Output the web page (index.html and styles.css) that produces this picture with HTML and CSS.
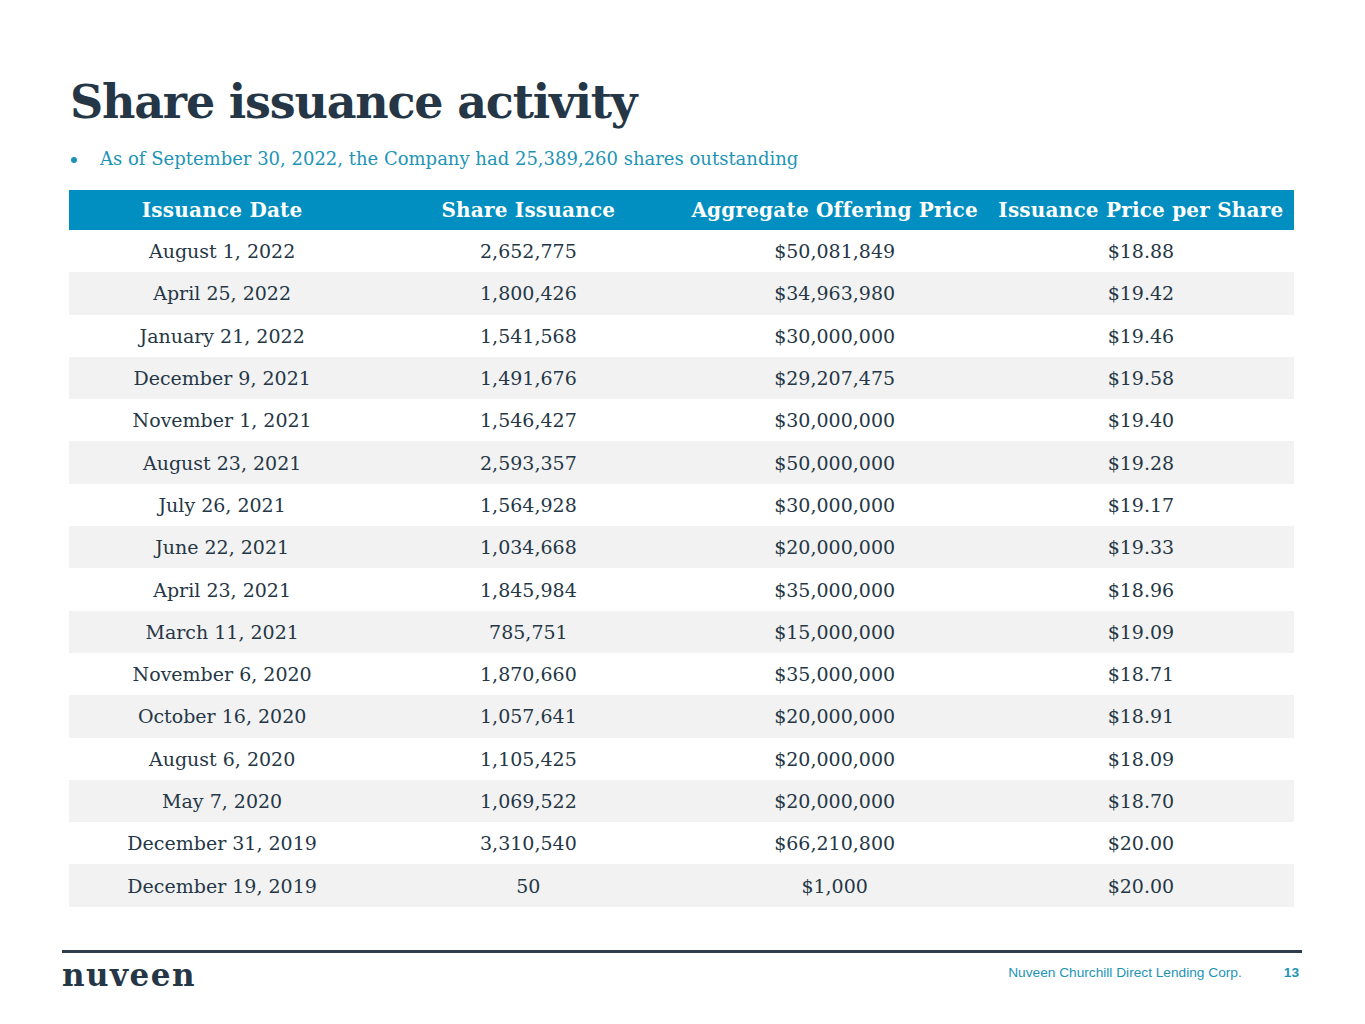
FILE: index.html
```html
<!DOCTYPE html>
<html>
<head>
<meta charset="utf-8">
<link rel="stylesheet" href="styles.css">
</head>
<body>
<div class="slide">
  <h1 class="title">Share issuance activity</h1>
  <ul class="bullets">
    <li>As of September 30, 2022, the Company had 25,389,260 shares outstanding</li>
  </ul>
  <table class="data">
    <thead>
      <tr><th>Issuance Date</th><th>Share Issuance</th><th>Aggregate Offering Price</th><th>Issuance Price per Share</th></tr>
    </thead>
    <tbody>
      <tr><td>August 1, 2022</td><td>2,652,775</td><td>$50,081,849</td><td>$18.88</td></tr>
      <tr><td>April 25, 2022</td><td>1,800,426</td><td>$34,963,980</td><td>$19.42</td></tr>
      <tr><td>January 21, 2022</td><td>1,541,568</td><td>$30,000,000</td><td>$19.46</td></tr>
      <tr><td>December 9, 2021</td><td>1,491,676</td><td>$29,207,475</td><td>$19.58</td></tr>
      <tr><td>November 1, 2021</td><td>1,546,427</td><td>$30,000,000</td><td>$19.40</td></tr>
      <tr><td>August 23, 2021</td><td>2,593,357</td><td>$50,000,000</td><td>$19.28</td></tr>
      <tr><td>July 26, 2021</td><td>1,564,928</td><td>$30,000,000</td><td>$19.17</td></tr>
      <tr><td>June 22, 2021</td><td>1,034,668</td><td>$20,000,000</td><td>$19.33</td></tr>
      <tr><td>April 23, 2021</td><td>1,845,984</td><td>$35,000,000</td><td>$18.96</td></tr>
      <tr><td>March 11, 2021</td><td>785,751</td><td>$15,000,000</td><td>$19.09</td></tr>
      <tr><td>November 6, 2020</td><td>1,870,660</td><td>$35,000,000</td><td>$18.71</td></tr>
      <tr><td>October 16, 2020</td><td>1,057,641</td><td>$20,000,000</td><td>$18.91</td></tr>
      <tr><td>August 6, 2020</td><td>1,105,425</td><td>$20,000,000</td><td>$18.09</td></tr>
      <tr><td>May 7, 2020</td><td>1,069,522</td><td>$20,000,000</td><td>$18.70</td></tr>
      <tr><td>December 31, 2019</td><td>3,310,540</td><td>$66,210,800</td><td>$20.00</td></tr>
      <tr><td>December 19, 2019</td><td>50</td><td>$1,000</td><td>$20.00</td></tr>
    </tbody>
  </table>
  <footer class="footer">
    <div class="logo">nuveen</div>
    <div class="foot-right">
      <span class="company">Nuveen Churchill Direct Lending Corp.</span>
      <span class="page">13</span>
    </div>
  </footer>
</div>
</body>
</html>
```
FILE: styles.css
```css
html, body { margin: 0; padding: 0; background: #ffffff; }
.slide {
  width: 1365px;
  height: 1024px;
  position: relative;
  box-sizing: border-box;
  padding: 72px 0 0 0;
  font-family: "DejaVu Serif", "Liberation Serif", serif;
}
.title {
  margin: 0 0 0 70px;
  font-size: 46px;
  line-height: 60px;
  font-weight: bold;
  color: #253746;
  letter-spacing: -1.2px;
}
.bullets {
  margin: 15px 0 0 70px;
  padding: 0;
  list-style: none;
  color: #1d94b6;
  font-size: 18px;
  line-height: 24px;
}
.bullets li {
  position: relative;
  padding-left: 30px;
}
.bullets li::before {
  content: "";
  position: absolute;
  left: 1px;
  top: 10px;
  width: 6px;
  height: 6px;
  border-radius: 50%;
  background: #1d94b6;
}
.data {
  margin: 19px 0 0 69px;
  width: 1225px;
  border-collapse: collapse;
  table-layout: fixed;
  color: #253746;
  font-size: 19px;
}
.data th {
  background: #008fc0;
  color: #ffffff;
  font-weight: bold;
  height: 40px;
  padding: 0;
  text-align: center;
  font-size: 20px;
  letter-spacing: 0.2px;
}
.data td {
  height: 42.3px;
  padding: 0;
  text-align: center;
}
.data tbody tr:nth-child(even) td { background: #f2f2f2; }
.footer {
  position: absolute;
  left: 62px;
  right: 63px;
  top: 950px;
  border-top: 3px solid #2e3d4b;
  display: flex;
  justify-content: space-between;
  align-items: flex-start;
}
.logo {
  font-family: "DejaVu Serif", serif;
  font-weight: bold;
  font-size: 31px;
  line-height: 30px;
  margin-top: 7px;
  color: #253746;
  letter-spacing: 1.5px;
}
.foot-right {
  font-family: "Liberation Sans", Arial, sans-serif;
  font-size: 13.7px;
  color: #1d94b6;
  margin-top: 12px;
  display: flex;
  gap: 42px;
  padding-right: 3px;
}
.page { font-weight: bold; }
```
